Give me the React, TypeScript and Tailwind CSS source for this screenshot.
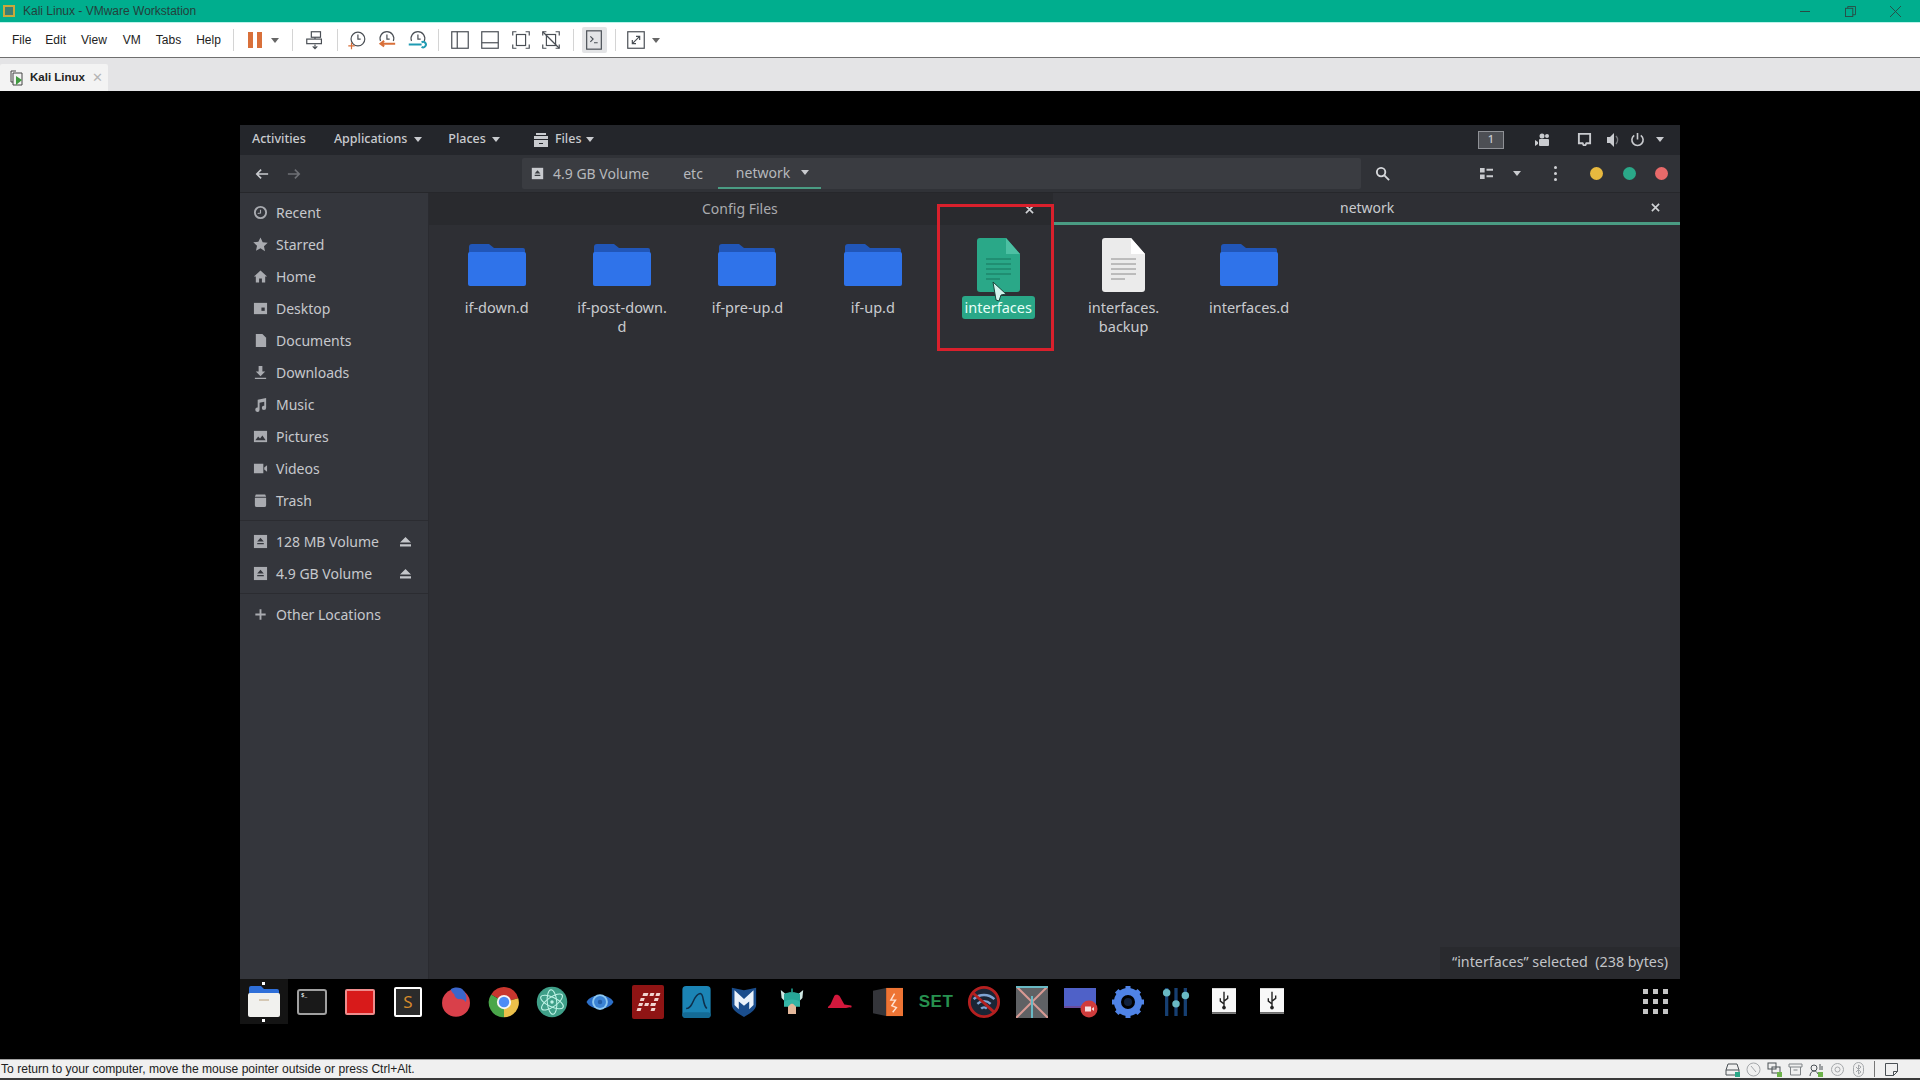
import { ReactNode } from "react";

const UI = "font-['Noto_Sans',sans-serif]";

function Caret({ className = "" }: { className?: string }) {
  return <span className={`inline-block w-0 h-0 border-x-[4px] border-x-transparent border-t-[5px] ${className}`} />;
}

function Sep({ className = "" }: { className?: string }) {
  return <div className={`w-px h-[22px] bg-[#d4d4d4] ${className}`} />;
}

function ToolIcon({ children, className = "" }: { children: ReactNode; className?: string }) {
  return (
    <svg viewBox="0 0 24 24" fill="none" stroke="#4a4f55" strokeWidth="1.3" className={`w-[22px] h-[22px] shrink-0 ${className}`}>
      {children}
    </svg>
  );
}

function VmToolbar() {
  return (
    <div className="h-[35px] bg-white flex items-center text-[12px] text-[#222] font-['Liberation_Sans',sans-serif] border-b border-b-[#6f6f6f]">
      <span className="ml-[12px]">File</span>
      <span className="ml-[14px]">Edit</span>
      <span className="ml-[15px]">View</span>
      <span className="ml-[16px]">VM</span>
      <span className="ml-[15px]">Tabs</span>
      <span className="ml-[15px]">Help</span>
      <Sep className="ml-[12px]" />
      <div className="ml-[14px] flex gap-[4px]">
        <div className="w-[5px] h-[16px] bg-[#d9703a]" />
        <div className="w-[5px] h-[16px] bg-[#d9703a]" />
      </div>
      <Caret className="ml-[9px] border-t-[#666]" />
      <Sep className="ml-[13px]" />
      <ToolIcon className="ml-[11px]">
        <rect x="8" y="3" width="10" height="6" />
        <rect x="3" y="11" width="16" height="5" />
        <path d="M12 9v2M12 17v4M9.5 19l2.5 2.5 2.5-2.5" />
      </ToolIcon>
      <Sep className="ml-[11px]" />
      <ToolIcon className="ml-[8px]">
        <circle cx="13" cy="11" r="7.5" />
        <path d="M13 6v5h3" />
        <path d="M6 15v7M2.5 18.5h7" stroke="#d9703a" />
      </ToolIcon>
      <ToolIcon className="ml-[7px]">
        <path d="M6 13a7.5 7.5 0 1 1 14 0" />
        <path d="M13 6v5h3" />
        <path d="M22 16H7M10 13l-4 3 4 3" stroke="#d9703a" strokeWidth="2.2" />
      </ToolIcon>
      <ToolIcon className="ml-[9px]">
        <path d="M6 13a7.5 7.5 0 1 1 14 0" />
        <path d="M13 6v5h3" />
        <path d="M3 17h14M17 14.5a3 3 0 1 1 0 5" stroke="#1f9bb3" strokeWidth="2.2" />
      </ToolIcon>
      <Sep className="ml-[10px]" />
      <ToolIcon className="ml-[10px]">
        <rect x="3" y="3" width="18" height="18" />
        <path d="M9 3v18" />
      </ToolIcon>
      <ToolIcon className="ml-[8px]">
        <rect x="3" y="3" width="18" height="18" />
        <path d="M3 15h18" />
      </ToolIcon>
      <ToolIcon className="ml-[9px]">
        <path d="M3 7V3h4M17 3h4v4M21 17v4h-4M7 21H3v-4" />
        <rect x="7" y="6" width="10" height="12" />
      </ToolIcon>
      <ToolIcon className="ml-[8px]">
        <path d="M3 7V3h4M17 3h4v4M21 17v4h-4M7 21H3v-4" />
        <rect x="7" y="6" width="10" height="12" />
        <path d="M3 3l18 18" />
      </ToolIcon>
      <Sep className="ml-[11px]" />
      <div className="ml-[8px] w-[25px] h-[26px] bg-[#e3e4e6] rounded-[2px] flex items-center justify-center">
        <ToolIcon className="w-[20px] h-[20px]">
          <rect x="4" y="2" width="16" height="20" />
          <path d="M8 8l3 3-3 3M12 15h4" />
        </ToolIcon>
      </div>
      <Sep className="ml-[8px]" />
      <ToolIcon className="ml-[9px]">
        <rect x="3" y="3" width="18" height="18" />
        <path d="M8 16l8-8M12 8h4v4M8 12v4h4" />
      </ToolIcon>
      <Caret className="ml-[5px] border-t-[#666]" />
    </div>
  );
}

function TitleBar() {
  return (
    <div className="h-[23px] bg-[#00ae8e] flex items-center border-b border-b-[#bdf3ea]">
      <div className="ml-[3px] w-[12px] h-[12px] border-2 border-[#c9a93a] bg-[#3c7f72]" />
      <span className="ml-[8px] text-[12px] text-[#23403b] font-['Liberation_Sans',sans-serif]">Kali Linux - VMware Workstation</span>
      <div className="ml-auto flex items-center">
        <div className="w-[10px] h-px bg-[#2a4a44]" />
        <svg viewBox="0 0 12 12" fill="none" stroke="#2a4a44" className="ml-[35px] w-[11px] h-[11px]">
          <rect x="0.5" y="2.5" width="8" height="9" />
          <path d="M3 2.5V.5h8.500v9H8.500" />
        </svg>
        <svg viewBox="0 0 12 12" fill="none" stroke="#2a4a44" className="ml-[34px] mr-[19px] w-[11px] h-[11px]">
          <path d="M0 0l12 12M12 0L0 12" />
        </svg>
      </div>
    </div>
  );
}

function FolderIcon() {
  return (
    <svg viewBox="0 0 58 42" className="w-[58px] h-[42px]">
      <path d="M1 3a3 3 0 0 1 3-3h17l5 4h29a2 2 0 0 1 2 2v6H1z" fill="#2156b8" />
      <path d="M0 10a2 2 0 0 1 2-2h54a2 2 0 0 1 2 2v30a2 2 0 0 1-2 2H2a2 2 0 0 1-2-2z" fill="#2f73ea" />
    </svg>
  );
}

function DocIcon({ tone }: { tone: "white" | "green" }) {
  const body = tone === "white" ? "#ebebeb" : "#2aa888";
  const fold = tone === "white" ? "#ffffff" : "#4cc0a3";
  const line = tone === "white" ? "#8c8c8c" : "#17745d";
  return (
    <svg viewBox="0 0 43 54" className="w-[43px] h-[54px]">
      <path d="M3 0h26l14 16v35a3 3 0 0 1-3 3H3a3 3 0 0 1-3-3V3a3 3 0 0 1 3-3z" fill={body} />
      <path d="M29 0l14 16H29z" fill={fold} />
      <path d="M9 21h25M9 26h25M9 31h25M9 36h25M9 41h14" stroke={line} strokeWidth="1" />
    </svg>
  );
}

const FILES: { name: ReactNode; kind: "folder" | "doc" | "selected" }[] = [
  { name: "if-down.d", kind: "folder" },
  { name: <>if-post-down.<br />d</>, kind: "folder" },
  { name: "if-pre-up.d", kind: "folder" },
  { name: "if-up.d", kind: "folder" },
  { name: "interfaces", kind: "selected" },
  { name: <>interfaces.<br />backup</>, kind: "doc" },
  { name: "interfaces.d", kind: "folder" },
];

function SideIcon({ name }: { name: string }) {
  const c = "#a9abb0";
  const shapes: Record<string, ReactNode> = {
    recent: <><circle cx="8" cy="8" r="6" fill="none" stroke={c} strokeWidth="2" /><path d="M8 5v3.500l-3 .5" fill="none" stroke={c} strokeWidth="1.200" /></>,
    starred: <path d="M8 0.500l2.300 5 5.400.6-4 3.700 1.100 5.400L8 12l-4.800 2.700 1.100-5.400-4-3.700 5.400-.6z" fill={c} />,
    home: <path d="M8 1.500l7 6.500h-2v6.500h-3.500V10h-3v4.500H3V8H1z" fill={c} />,
    desktop: <><rect x="1" y="2" width="14" height="12" fill={c} /><rect x="9" y="7" width="3.500" height="3.500" fill="#34363c" /></>,
    documents: <path d="M3 1h7l4 4v10H3z" fill={c} />,
    downloads: <path d="M6 1h4v6h3l-5 5-5-5h3zM2 13.500h12V15H2z" fill={c} />,
    music: <path d="M5 3l9-2v10.500a2.300 2.300 0 1 1-2-2.200V5L7 6v7.500a2.300 2.300 0 1 1-2-2.200z" fill={c} />,
    pictures: <><rect x="1" y="2" width="14" height="12" fill={c} /><path d="M2.500 12l3-4 2 2 2.500-3 3.500 5z" fill="#34363c" /></>,
    videos: <path d="M1 3h10v10H1zM12 7l3-2.500v7L12 9z" fill={c} />,
    trash: <path d="M3 1.500h10L14 4H2zM2 5h12v8a2 2 0 0 1-2 2H4a2 2 0 0 1-2-2z" fill={c} />,
    volume: <><rect x="1" y="1" width="14" height="14" fill={c} /><path d="M8 4l3.500 4h-7zM4.500 9.500h7V11h-7z" fill="#34363c" /></>,
    plus: <path d="M7 2.500h2V7h4.500v2H9v4.500H7V9H2.500V7H7z" fill={c} />,
  };
  return <svg viewBox="0 0 16 16" className="w-[15px] h-[15px] shrink-0">{shapes[name]}</svg>;
}

function Eject() {
  return (
    <svg viewBox="0 0 12 12" className="ml-auto mr-[17px] w-[11px] h-[11px] shrink-0">
      <path d="M6 1l6 6H0zM0 9h12v2.500H0z" fill="#c4c6ca" />
    </svg>
  );
}

function SideRow({ icon, label, eject }: { icon: string; label: string; eject?: boolean }) {
  return (
    <div className="h-[32px] flex items-center pl-[13px] text-[14px] text-[#c6c8cc]">
      <SideIcon name={icon} />
      <span className="ml-[8px]">{label}</span>
      {eject && <Eject />}
    </div>
  );
}

function Sidebar() {
  return (
    <div className="w-[189px] shrink-0 bg-[#34363c] border-r border-r-[#2a2b30] pt-[3px]">
      <SideRow icon="recent" label="Recent" />
      <SideRow icon="starred" label="Starred" />
      <SideRow icon="home" label="Home" />
      <SideRow icon="desktop" label="Desktop" />
      <SideRow icon="documents" label="Documents" />
      <SideRow icon="downloads" label="Downloads" />
      <SideRow icon="music" label="Music" />
      <SideRow icon="pictures" label="Pictures" />
      <SideRow icon="videos" label="Videos" />
      <SideRow icon="trash" label="Trash" />
      <div className="h-px bg-[#2b2c31] mt-[4px] mb-[4px]" />
      <SideRow icon="volume" label="128 MB Volume" eject />
      <SideRow icon="volume" label="4.9 GB Volume" eject />
      <div className="h-px bg-[#2b2c31] mt-[4px] mb-[4px]" />
      <SideRow icon="plus" label="Other Locations" />
    </div>
  );
}

function TopBar() {
  return (
    <div className="h-[30px] bg-[#24262b] flex items-center text-[12.500px] font-medium text-[#c9cbcf] pl-[12px] pb-[1px]">
      <span>Activities</span>
      <span className="ml-[28px]">Applications</span>
      <Caret className="ml-[7px] border-t-[#c9cbcf]" />
      <span className="ml-[26px]">Places</span>
      <Caret className="ml-[6px] border-t-[#c9cbcf]" />
      <svg viewBox="0 0 16 16" className="ml-[33px] w-[16px] h-[16px]">
        <path d="M3 1h10v2H3zM1 4h14v3H1zM1 8h14v7H1z" fill="#c9cbcf" />
        <path d="M6 11h4v1H6z" fill="#24262b" />
      </svg>
      <span className="ml-[6px]">Files</span>
      <Caret className="ml-[5px] border-t-[#c9cbcf]" />
      <div className="ml-auto w-[26px] h-[18px] bg-[#4d4f54] border border-[#8f9196] flex items-center justify-center text-[11px]">1</div>
      <svg viewBox="0 0 16 16" className="ml-[30px] w-[16px] h-[16px]">
        <circle cx="8" cy="4" r="2.500" fill="#c9cbcf" />
        <circle cx="13" cy="4" r="2" fill="#c9cbcf" />
        <rect x="5" y="7" width="10" height="7" rx="1" fill="#c9cbcf" />
        <path d="M1 8l3 2v2l-3 2z" fill="#c9cbcf" />
      </svg>
      <svg viewBox="0 0 16 16" fill="none" stroke="#c9cbcf" strokeWidth="2" className="ml-[27px] w-[15px] h-[15px]">
        <path d="M2 2h12v10H10l-1 2H7l-1-2H2z" />
      </svg>
      <svg viewBox="0 0 16 16" className="ml-[13px] w-[16px] h-[16px]">
        <path d="M2 5h3l4-4v14l-4-4H2z" fill="#c9cbcf" />
        <path d="M11 4a6 6 0 0 1 0 8" fill="none" stroke="#77797d" strokeWidth="1.500" />
      </svg>
      <svg viewBox="0 0 16 16" fill="none" stroke="#c9cbcf" strokeWidth="1.700" className="ml-[9px] w-[15px] h-[15px]">
        <path d="M8 1v7M4.500 3.500a6 6 0 1 0 7 0" />
      </svg>
      <Caret className="ml-[11px] mr-[16px] border-t-[#c9cbcf]" />
    </div>
  );
}

function HeaderBar() {
  return (
    <div className="h-[38px] bg-[#303237] flex items-center border-b border-b-[#26272b] text-[#c9cbcf]">
      <svg viewBox="0 0 16 16" fill="none" stroke="#c9cbcf" strokeWidth="1.800" className="ml-[15px] w-[14px] h-[14px]">
        <path d="M15 8H2M7 3L2 8l5 5" />
      </svg>
      <svg viewBox="0 0 16 16" fill="none" stroke="#6e7075" strokeWidth="1.800" className="ml-[18px] w-[14px] h-[14px]">
        <path d="M1 8h13M9 3l5 5-5 5" />
      </svg>
      <div className="ml-[221px] w-[839px] h-[31px] bg-[#3a3c41] rounded-[2px] flex items-center text-[14px] text-[#b6b8bc]">
        <svg viewBox="0 0 16 16" className="ml-[9px] w-[13px] h-[13px]">
          <rect x="1" y="1" width="14" height="14" fill="#c9cbcf" />
          <path d="M8 4l3.500 4h-7zM4.500 9.500h7V11h-7z" fill="#3a3c41" />
        </svg>
        <span className="ml-[9px]">4.9 GB Volume</span>
        <span className="ml-[34px]">etc</span>
        <div className="ml-[15px] w-[103px] h-[31px] border-b-2 border-b-[#4a9c83] flex items-center pl-[18px]">
          <span>network</span>
          <Caret className="ml-[11px] border-t-[#c9cbcf]" />
        </div>
      </div>
      <svg viewBox="0 0 16 16" fill="none" stroke="#d6d8db" strokeWidth="2" className="ml-[14px] w-[15px] h-[15px]">
        <circle cx="6.500" cy="6.500" r="4.500" />
        <path d="M10 10l5 5" />
      </svg>
      <svg viewBox="0 0 14 14" fill="#c9cbcf" className="ml-[90px] w-[13px] h-[13px]">
        <path d="M0 1h5v5H0zM7 2h7v2H7zM0 8h5v5H0zM7 9h7v2H7z" />
      </svg>
      <Caret className="ml-[20px] border-t-[#c9cbcf]" />
      <div className="ml-[33px] flex flex-col gap-[3px]">
        <div className="w-[3px] h-[3px] rounded-full bg-[#d0d2d5]" />
        <div className="w-[3px] h-[3px] rounded-full bg-[#d0d2d5]" />
        <div className="w-[3px] h-[3px] rounded-full bg-[#d0d2d5]" />
      </div>
      <div className="ml-[33px] w-[13px] h-[13px] rounded-full bg-[#e8b93f]" />
      <div className="ml-[20px] w-[13px] h-[13px] rounded-full bg-[#2aa888]" />
      <div className="ml-[19px] w-[13px] h-[13px] rounded-full bg-[#e86a6a]" />
    </div>
  );
}

function TabClose({ className = "" }: { className?: string }) {
  return (
    <svg viewBox="0 0 10 10" fill="none" stroke="#d0d2d5" strokeWidth="1.800" className={`w-[9px] h-[9px] ${className}`}>
      <path d="M1 1l8 8M9 1L1 9" />
    </svg>
  );
}

function MainArea() {
  return (
    <div className="flex-1 min-w-0 bg-[#2e2f34] flex flex-col relative">
      <div className="h-[32px] flex shrink-0 text-[14px]">
        <div className="w-[624px] bg-[#292a2e] flex items-center text-[#a9abaf]">
          <span className="ml-[273px] mr-auto pb-[2px]">Config Files</span>
          <TabClose className="mr-[19px]" />
        </div>
        <div className="flex-1 border-b-[3px] border-b-[#4a9c83] flex items-center text-[#c9cbcf]">
          <span className="ml-[287px]">network</span>
          <TabClose className="ml-auto mr-[20px]" />
        </div>
      </div>
      <div className="flex pl-[5px] pt-[13px]">
        {FILES.map((f, i) => (
          <div key={i} className="w-[125.400px] shrink-0 flex flex-col items-center text-[14.500px] leading-[19px] text-[#c9cbcf] text-center">
            <div className="h-[54px] flex items-center justify-center">
              {f.kind === "folder" && <FolderIcon />}
              {f.kind === "doc" && <DocIcon tone="white" />}
              {f.kind === "selected" && <DocIcon tone="green" />}
            </div>
            {f.kind === "selected" ? (
              <div className="mt-[4px] bg-[#2aa888] rounded-[3px] px-[3px] py-[2px] text-[#e8fff8]">{f.name}</div>
            ) : (
              <div className="mt-[6px]">{f.name}</div>
            )}
          </div>
        ))}
      </div>
      <div className="absolute right-0 bottom-0 w-[240px] h-[32px] bg-[#292a2e] flex items-center pl-[12px] pb-[2px] text-[14.300px] text-[#c2c4c8]">
        “interfaces” selected&nbsp; (238 bytes)
      </div>
    </div>
  );
}

function DockGlyph({ i }: { i: number }) {
  switch (i) {
    case 0:
      return (
        <svg viewBox="0 0 40 40" className="w-[40px] h-[40px]">
          <path d="M5 6a2 2 0 0 1 2-2h10l3 3h13a2 2 0 0 1 2 2v6H5z" fill="#2f6fd8" />
          <rect x="4" y="11" width="32" height="24" rx="2" fill="#f1f1ee" />
          <path d="M15 18h10" stroke="#b9a07a" />
        </svg>
      );
    case 1:
      return (
        <div className="w-[30px] h-[26px] bg-[#191919] border-2 border-[#a0a0a0] rounded-[3px] text-[6px] leading-[8px] text-white px-[2px]">$_</div>
      );
    case 2:
      return <div className="w-[30px] h-[26px] bg-[#d81a1a] border-2 border-[#ee8c8c] rounded-[2px]" />;
    case 3:
      return (
        <div className="w-[28px] h-[30px] bg-[#2b2b2b] border-2 border-white rounded-[2px] flex items-center justify-center text-[17px] leading-none text-[#d58a2c]">S</div>
      );
    case 4:
      return (
        <svg viewBox="0 0 40 40" className="w-[36px] h-[36px]">
          <circle cx="20" cy="21" r="15.500" fill="#d9404a" />
          <path d="M14 6c4-3 12-3 15 2 3 4 3 9 2 12-2-3-5-4-8-3-3-1-5-3-5-6-2-1-3-3-4-5z" fill="#3b66cc" />
        </svg>
      );
    case 5:
      return (
        <svg viewBox="0 0 40 40" className="w-[38px] h-[38px]">
          <path d="M20 20L6.500 12A15.500 15.500 0 0 1 35 16z" fill="#c9362e" />
          <path d="M20 20l15-4a15.500 15.500 0 0 1-15 20z" fill="#ecc04a" />
          <path d="M20 20v16A15.500 15.500 0 0 1 6.500 12z" fill="#4aa64a" />
          <circle cx="20" cy="20" r="7.500" fill="#f5f5f5" />
          <circle cx="20" cy="20" r="5.500" fill="#4c8bf5" />
        </svg>
      );
    case 6:
      return (
        <svg viewBox="0 0 40 40" className="w-[38px] h-[38px]">
          <circle cx="20" cy="20" r="16" fill="#3f9f88" />
          <g fill="none" stroke="#bff3e6" strokeWidth="1.100">
            <ellipse cx="20" cy="20" rx="13" ry="5" transform="rotate(25 20 20)" />
            <ellipse cx="20" cy="20" rx="13" ry="5" transform="rotate(85 20 20)" />
            <ellipse cx="20" cy="20" rx="13" ry="5" transform="rotate(145 20 20)" />
          </g>
          <circle cx="20" cy="20" r="1.800" fill="#bff3e6" />
        </svg>
      );
    case 7:
      return (
        <svg viewBox="0 0 40 40" className="w-[30px] h-[30px]">
          <path d="M2 20C8 8 32 8 38 20 32 32 8 32 2 20z" fill="#2c6fc8" />
          <circle cx="20" cy="20" r="10.500" fill="#8cc8f2" />
          <circle cx="20" cy="20" r="8" fill="#3b84d6" />
          <circle cx="20" cy="20" r="3" fill="#245ea8" />
        </svg>
      );
    case 8:
      return (
        <svg viewBox="0 0 32 34" className="w-[32px] h-[34px]">
          <rect width="32" height="34" rx="2" fill="#8f1414" />
          <g fill="#f1d4d0" transform="skewX(-18) translate(7 0)">
            <path d="M7 8h5v3H7zM14 8h4v3h-4zM20 8h4v3h-4zM6 13h4v3H6zM20 13h4v3h-4zM6 18h4v3H6zM12 18h4v3h-4zM18 18h5v3h-5zM6 23h4v3H6zM20 23h4v3h-4z" />
          </g>
        </svg>
      );
    case 9:
      return (
        <svg viewBox="0 0 30 34" className="w-[29px] h-[32px]">
          <rect width="30" height="34" rx="4" fill="#1b84b5" />
          <rect y="28" width="30" height="6" rx="3" fill="#146b96" />
          <path d="M4 24c8 0 7-15 15-16 4 0 2 11 7 16" fill="none" stroke="#0e2f4b" strokeWidth="1.600" />
        </svg>
      );
    case 10:
      return (
        <svg viewBox="0 0 30 36" className="w-[26px] h-[33px]">
          <path d="M1 2l14 3 14-3v20c0 6-8 10-14 14C9 32 1 28 1 22z" fill="#1a4d8c" />
          <path d="M4 5l11 10L26 5v17l-5 5V18l-6 5-6-5v9l-5-5z" fill="#eaf2fb" />
        </svg>
      );
    case 11:
      return (
        <svg viewBox="0 0 30 36" className="w-[24px] h-[30px]">
          <path d="M1 3l6 5c4-2 11-2 16 0l6-5-1 10-4 4H6l-4-4z" fill="#cfe7e2" />
          <path d="M15 1v5" stroke="#1e9f90" strokeWidth="2" />
          <path d="M5 8c5-3 15-3 20 0v14H5z" fill="#27a597" />
          <path d="M10 20h10v13H10z" fill="#e3b79a" />
          <path d="M5 18c5-4 15-4 20 0v6h-5l-5-5-5 5H5z" fill="#35b5a6" />
        </svg>
      );
    case 12:
      return (
        <svg viewBox="0 0 30 20" className="w-[26px] h-[18px]">
          <path d="M8 4c1-3 5-3 7 0l5 9 8 1c1 2 0 3-2 2l-4 1H1c0-2 2-3 3-4z" fill="#d2183c" />
        </svg>
      );
    case 13:
      return (
        <svg viewBox="0 0 32 32" className="w-[30px] h-[30px]">
          <path d="M0 4l14-3v30L0 28z" fill="#34353a" />
          <path d="M14 1h18v30H14z" fill="#ee7434" />
          <path d="M23 7l-4 7h5l-4 6 5 2-4 5" fill="none" stroke="#ffe2d2" strokeWidth="1.500" />
        </svg>
      );
    case 14:
      return <span className="text-[17px] font-bold tracking-[0.5px] text-[#27914f] font-['Liberation_Sans',sans-serif]">SET</span>;
    case 15:
      return (
        <svg viewBox="0 0 36 36" className="w-[34px] h-[34px]">
          <circle cx="18" cy="18" r="15.500" fill="#1a2535" stroke="#b52020" strokeWidth="3" />
          <g fill="none" stroke="#7fa4d4" strokeWidth="2.500">
            <path d="M7 15a16 16 0 0 1 22 0M11 20a10 10 0 0 1 14 0M15 25a4 4 0 0 1 6 0" />
          </g>
          <path d="M7 9l22 20" stroke="#b52020" strokeWidth="3" />
        </svg>
      );
    case 16:
      return (
        <svg viewBox="0 0 32 32" className="w-[32px] h-[32px]">
          <rect width="32" height="32" fill="#5f6164" />
          <path d="M0 0l32 32" stroke="#d99a94" strokeWidth="2" />
          <path d="M32 0L0 32" stroke="#d99a94" strokeWidth="2" />
          <path d="M0 1h32M16 10v22" stroke="#69b9c4" strokeWidth="2" />
        </svg>
      );
    case 17:
      return (
        <svg viewBox="0 0 36 34" className="w-[36px] h-[34px]">
          <rect x="2" y="3" width="32" height="18" fill="#4f61c8" />
          <path d="M2 21h32v2H2z" fill="#6a4d9e" />
          <circle cx="27" cy="24" r="8.500" fill="#cf3c3c" />
          <rect x="23" y="21.500" width="6" height="5" fill="#f5e0e0" />
          <path d="M29.500 24l2.500-2v4z" fill="#f5e0e0" />
        </svg>
      );
    case 18:
      return (
        <svg viewBox="0 0 34 34" className="w-[34px] h-[34px]">
          <circle cx="17" cy="17" r="10.500" fill="none" stroke="#4f83e6" strokeWidth="7" />
          <path d="M17 1v6M17 27v6M1 17h6M27 17h6M5.700 5.700l4.200 4.200M24 24l4.300 4.300M28.300 5.700L24 10M10 24l-4.300 4.300" stroke="#4f83e6" strokeWidth="5" />
          <circle cx="17" cy="17" r="4" fill="#10203c" />
        </svg>
      );
    case 19:
      return (
        <svg viewBox="0 0 30 34" className="w-[28px] h-[32px]">
          <path d="M5 2v30M15 2v30M25 2v30" stroke="#163f72" strokeWidth="3.500" />
          <circle cx="5" cy="7" r="4" fill="#69b9c4" />
          <circle cx="15" cy="19" r="4" fill="#69b9c4" />
          <circle cx="25" cy="10" r="4" fill="#69b9c4" />
        </svg>
      );
    default:
      return (
        <svg viewBox="0 0 26 30" className="w-[24px] h-[28px]">
          <rect width="26" height="26" fill="#f8f8f8" />
          <path d="M0 26h26v2H0z" fill="#7c7c7c" />
          <path d="M13 4v17M13 14l4-3V8M13 17l-4-3v-3" fill="none" stroke="#222" strokeWidth="1.500" />
          <circle cx="13" cy="21" r="2" fill="#222" />
        </svg>
      );
  }
}

function Dock() {
  return (
    <div className="h-[45px] bg-black flex items-center">
      {Array.from({ length: 22 }).map((_, i) => (
        <div key={i} className={`w-[48px] h-[45px] shrink-0 flex items-center justify-center relative ${i === 0 ? "bg-[#141414]" : ""}`}>
          <DockGlyph i={i} />
          {i === 0 && <div className="absolute top-[3px] left-[22px] w-[3px] h-[3px] bg-white" />}
          {i === 0 && <div className="absolute bottom-[2px] left-[22px] w-[3px] h-[3px] bg-white" />}
        </div>
      ))}
      <div className="ml-auto mr-[12px] grid grid-cols-3 gap-[5px]">
        {Array.from({ length: 9 }).map((_, i) => (
          <div key={i} className="w-[5px] h-[5px] bg-[#c4c4c4]" />
        ))}
      </div>
    </div>
  );
}

function GuestScreen() {
  return (
    <div className="w-[1440px] ml-[240px] mt-[34px] relative">
      <TopBar />
      <HeaderBar />
      <div className="flex h-[786px]">
        <Sidebar />
        <MainArea />
      </div>
      <Dock />
      {/* marker drawn over the screenshot */}
      <div className="absolute left-[697px] top-[79px] w-[117px] h-[147px] border-[3px] border-[#d9202c]" />
      <svg viewBox="0 0 15 21" className="absolute left-[752px] top-[156px] w-[15px] h-[21px]">
        <path d="M1 1l13 12-5 1-2 6-3-1z" fill="#d4f4ee" stroke="#17453a" />
      </svg>
    </div>
  );
}

function StatusIcons() {
  const dark = "#4a5055";
  const light = "#a5a8ab";
  return (
    <div className="ml-auto flex items-center gap-[6px] mr-[21px]">
      <svg viewBox="0 0 15 15" fill="none" stroke={dark} className="w-[15px] h-[15px]">
        <path d="M3 2h9l2 6v5H1V8zM1 8h13" />
        <rect x="10" y="10" width="5" height="5" fill="#2aa888" stroke="none" />
      </svg>
      <svg viewBox="0 0 15 15" fill="none" stroke={light} className="w-[15px] h-[15px]">
        <circle cx="7.500" cy="7.500" r="6.500" />
        <path d="M5 4l5 6" />
      </svg>
      <svg viewBox="0 0 15 15" fill="none" stroke={dark} className="w-[15px] h-[15px]">
        <rect x="1" y="1" width="8" height="6" />
        <rect x="5" y="5" width="8" height="6" />
        <rect x="10" y="10" width="5" height="5" fill="#6cb24a" stroke="none" />
      </svg>
      <svg viewBox="0 0 15 15" fill="none" stroke="#7f8386" className="w-[15px] h-[15px]">
        <path d="M1 2h13v3H1zM2.500 5v8h10V5M5.500 8h4" />
      </svg>
      <svg viewBox="0 0 15 15" fill="none" stroke={dark} className="w-[15px] h-[15px]">
        <circle cx="5" cy="6" r="3" />
        <path d="M1 14c0-3 2-5 4-5s3 1 4 3M11 2v6M13 4v4" />
        <rect x="9" y="10" width="5" height="5" fill="#6cb24a" stroke="none" />
      </svg>
      <svg viewBox="0 0 15 15" fill="none" stroke={light} className="w-[15px] h-[15px]">
        <circle cx="7.500" cy="7.500" r="6" />
        <circle cx="7.500" cy="7.500" r="2.500" />
      </svg>
      <svg viewBox="0 0 15 15" fill="none" stroke={light} className="w-[15px] h-[15px]">
        <rect x="2.500" y="0.500" width="10" height="14" rx="5" />
        <path d="M5 5l5 5-2.500 2V3L10 5l-5 5" />
      </svg>
      <div className="w-px h-[16px] bg-[#777] ml-[2px]" />
      <svg viewBox="0 0 15 15" fill="none" stroke={dark} className="ml-[3px] w-[15px] h-[15px]">
        <path d="M1.500 1.500h12v8l-4 4h-8zM13.500 9.500h-4v4" />
      </svg>
    </div>
  );
}

export default function App() {
  return (
    <div className={`w-[1920px] h-[1080px] flex flex-col bg-black overflow-hidden ${UI}`}>
      <TitleBar />
      <VmToolbar />
      <div className="h-[33px] bg-[#e4e4e6] pt-[6px]">
        <div className="w-[108px] h-[27px] bg-[#f3f3f3] rounded-t-[2px] flex items-center text-[11.500px] font-bold text-[#222] font-['Liberation_Sans',sans-serif]">
          <svg viewBox="0 0 16 16" fill="none" className="ml-[10px] w-[16px] h-[16px]">
            <path d="M6 1H1v11h2" stroke="#444" />
            <path d="M3 3h9v12H3z" stroke="#444" />
            <path d="M6 6l6 4-6 5z" fill="#3f9a3f" />
          </svg>
          <span className="ml-[4px]">Kali Linux</span>
          <span className="ml-[7px] text-[#b5b5b5] font-normal text-[13px]">✕</span>
        </div>
      </div>
      <div className="flex-1 bg-black min-h-0">
        <GuestScreen />
      </div>
      <div className="h-[21px] bg-[#f0f0f0] border-t border-t-[#a0a0a0] border-b-2 border-b-[#3a3a3a] flex items-center text-[12.100px] text-[#222] font-['Liberation_Sans',sans-serif]">
        <span className="ml-[1px] pt-[1px]">To return to your computer, move the mouse pointer outside or press Ctrl+Alt.</span>
        <StatusIcons />
      </div>
    </div>
  );
}
